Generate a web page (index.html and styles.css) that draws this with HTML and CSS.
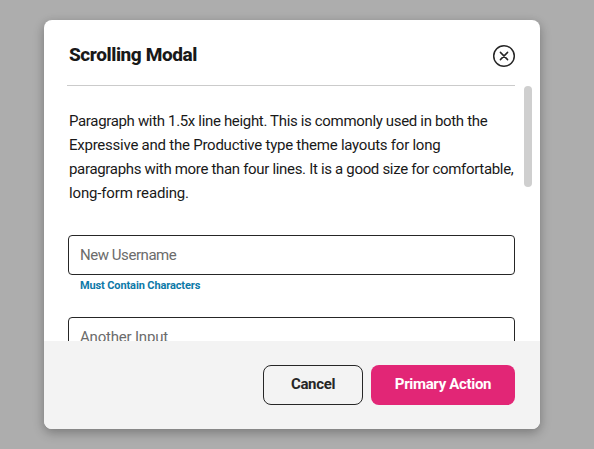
FILE: index.html
```html
<!DOCTYPE html>
<html lang="en">
<head>
<meta charset="utf-8">
<title>Scrolling Modal</title>
<link rel="stylesheet" href="styles.css">
</head>
<body>
<section class="modal" role="dialog" aria-labelledby="modal-title">
  <header class="modal-header">
    <h1 class="modal-title" id="modal-title">Scrolling Modal</h1>
    <button class="close" aria-label="Close">
      <svg width="24" height="24" viewBox="0 0 24 24" fill="none" stroke="#262626" stroke-width="1.5" stroke-linecap="round"><circle cx="12" cy="12" r="10.3"/><path d="M8.4 8.4l7.2 7.2M15.6 8.4l-7.2 7.2"/></svg>
    </button>
  </header>
  <div class="modal-body">
    <div class="content">
      <p class="copy">
        <span class="line line-1">Paragraph with 1.5x line height. This is commonly used in both the</span>
        <span class="line line-2">Expressive and the Productive type theme layouts for long</span>
        <span class="line line-3">paragraphs with more than four lines. It is a good size for comfortable,</span>
        <span class="line line-4">long-form reading.</span>
      </p>
      <div class="field">New Username</div>
      <div class="helper">Must Contain Characters</div>
      <div class="field field-next">Another Input</div>
    </div>
    <div class="scrollbar"></div>
  </div>
  <footer class="modal-footer">
    <button class="button secondary">Cancel</button>
    <button class="button primary">Primary Action</button>
  </footer>
</section>
</body>
</html>
```
FILE: styles.css
```css
* { box-sizing: border-box; }
body {
  margin: 0;
  height: 449px;
  padding: 20px 54px 20px 44px;
  overflow: hidden;
  background: #adadad;
  color: #191919;
  font-family: Roboto, "Liberation Sans", sans-serif;
}
.modal {
  display: flex;
  flex-direction: column;
  height: 409px;
  border-radius: 8px;
  background: #fff;
  overflow: hidden;
  box-shadow: 0 4px 12px rgba(0, 0, 0, .24), 0 2px 8px rgba(0, 0, 0, .08);
}
.modal-header {
  display: flex;
  flex: none;
  align-items: center;
  justify-content: space-between;
  height: 66px;
  margin: 0 25px 0 23px;
  padding: 4px 0 0 2px;
  border-bottom: 1px solid #cbcbcb;
}
.modal-title { margin: 0; font-size: 19px; line-height: 24px; font-weight: 800; letter-spacing: -.42px; }
.close { display: flex; width: 24px; height: 24px; margin: 2px -1px 0 0; padding: 0; border: 0; background: none; }
.modal-body { display: flex; flex: 1; min-height: 0; overflow: hidden; }
.content { width: 447px; margin-left: 24px; padding-top: 23px; }
.copy { height: 96px; margin: 0 0 30px 1px; font-size: 15px; line-height: 24px; font-weight: 450; letter-spacing: -.32px; }
.line { display: block; width: max-content; white-space: nowrap; }
.line-1 { letter-spacing: -.335px; }
.line-2 { letter-spacing: -.24px; }
.line-4 { letter-spacing: -.15px; }
.field {
  display: flex;
  align-items: center;
  height: 40px;
  padding-left: 11px;
  border: 1px solid #262626;
  border-radius: 4px;
  color: #6b6b6b;
  font-size: 15px;
  font-weight: 450;
  letter-spacing: -.45px;
}
.field-next { letter-spacing: -.2px; }
.helper { height: 42px; padding: 3px 0 0 12px; color: #0c79a8; font-size: 11px; line-height: 16px; font-weight: 700; letter-spacing: -.12px; }
.scrollbar { width: 8px; height: 101px; margin-left: 9px; border-radius: 4px; background: #cfcfcf; }
.modal-footer {
  display: flex;
  flex: none;
  justify-content: flex-end;
  gap: 8px;
  height: 88px;
  padding: 24px 25px;
  background: #f3f3f3;
}
.button { height: 40px; padding: 0 0 2px; border-radius: 8px; font: inherit; font-size: 15px; font-weight: 700; letter-spacing: -.32px; }
.secondary { width: 100px; border: 1px solid #262626; background: transparent; color: #262626; }
.primary { width: 144px; border: 0; background: #e22676; color: #fff; }
```
